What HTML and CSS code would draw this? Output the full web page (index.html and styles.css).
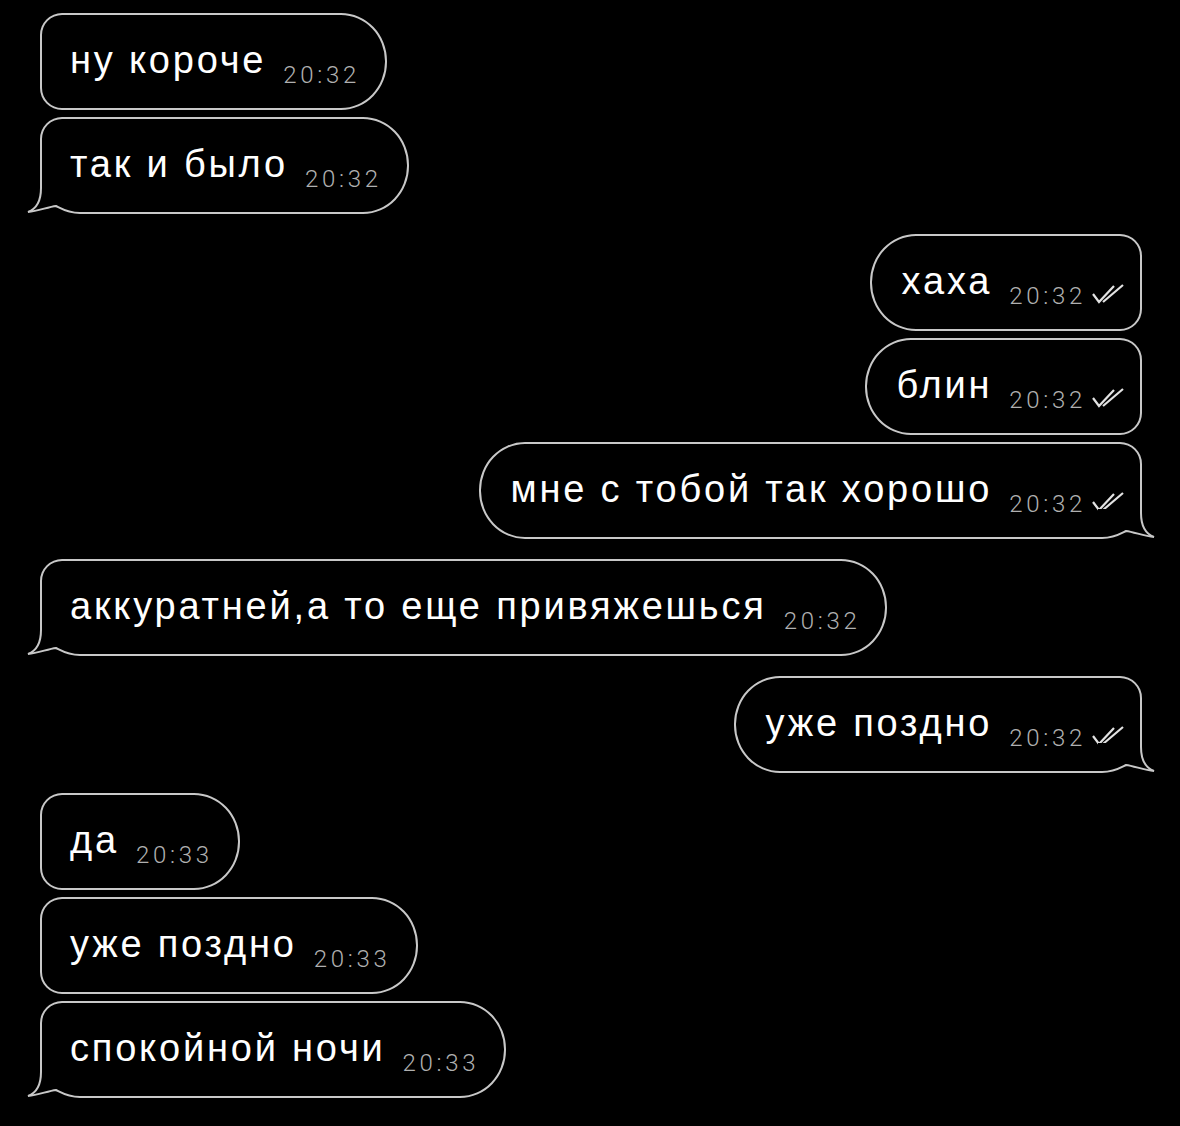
FILE: index.html
```html
<!DOCTYPE html>
<html lang="ru">
<head>
    <meta charset="UTF-8">
    <meta name="viewport" content="width=device-width, initial-scale=1.0">
    <title>Чат</title>
    <link rel="stylesheet" href="styles.css">
</head>
<body>
    <div class="chat">
        <div class="group in">
            <div class="bubble"><span class="text">ну короче</span><span class="time">20:32</span></div>
            <div class="bubble has-tail"><span class="text">так и было</span><span class="time">20:32</span>
                <svg class="tail" viewBox="0 0 60 40"><rect x="0" y="10" width="60" height="30" fill="#000"/><path d="M17 10 L17 14 C17 28 12 35 4 38 C14 37 24 33 32 32 C38 35 44 39 56 39 L60 39" fill="none" stroke="#c8c8c8" stroke-width="2"/></svg>
            </div>
        </div>

        <div class="group out">
            <div class="bubble"><span class="text">хаха</span><span class="time">20:32</span><svg class="check" viewBox="0 0 34 22"><path d="M2 11 L8 19 L23 3 M12 19 L32 2" fill="none" stroke="#e2e2e2" stroke-width="2.2"/></svg></div>
            <div class="bubble"><span class="text">блин</span><span class="time">20:32</span><svg class="check" viewBox="0 0 34 22"><path d="M2 11 L8 19 L23 3 M12 19 L32 2" fill="none" stroke="#e2e2e2" stroke-width="2.2"/></svg></div>
            <div class="bubble has-tail"><span class="text">мне с тобой так хорошо</span><span class="time">20:32</span><svg class="check" viewBox="0 0 34 22"><path d="M2 11 L8 19 L23 3 M12 19 L32 2" fill="none" stroke="#e2e2e2" stroke-width="2.2"/></svg>
                <svg class="tail" viewBox="0 0 60 40"><rect x="0" y="10" width="60" height="30" fill="#000"/><path d="M17 10 L17 14 C17 28 12 35 4 38 C14 37 24 33 32 32 C38 35 44 39 56 39 L60 39" fill="none" stroke="#c8c8c8" stroke-width="2"/></svg>
            </div>
        </div>

        <div class="group in">
            <div class="bubble has-tail"><span class="text">аккуратней,а то еще привяжешься</span><span class="time">20:32</span>
                <svg class="tail" viewBox="0 0 60 40"><rect x="0" y="10" width="60" height="30" fill="#000"/><path d="M17 10 L17 14 C17 28 12 35 4 38 C14 37 24 33 32 32 C38 35 44 39 56 39 L60 39" fill="none" stroke="#c8c8c8" stroke-width="2"/></svg>
            </div>
        </div>

        <div class="group out">
            <div class="bubble has-tail"><span class="text">уже поздно</span><span class="time">20:32</span><svg class="check" viewBox="0 0 34 22"><path d="M2 11 L8 19 L23 3 M12 19 L32 2" fill="none" stroke="#e2e2e2" stroke-width="2.2"/></svg>
                <svg class="tail" viewBox="0 0 60 40"><rect x="0" y="10" width="60" height="30" fill="#000"/><path d="M17 10 L17 14 C17 28 12 35 4 38 C14 37 24 33 32 32 C38 35 44 39 56 39 L60 39" fill="none" stroke="#c8c8c8" stroke-width="2"/></svg>
            </div>
        </div>

        <div class="group in">
            <div class="bubble"><span class="text">да</span><span class="time">20:33</span></div>
            <div class="bubble"><span class="text">уже поздно</span><span class="time">20:33</span></div>
            <div class="bubble has-tail"><span class="text">спокойной ночи</span><span class="time">20:33</span>
                <svg class="tail" viewBox="0 0 60 40"><rect x="0" y="10" width="60" height="30" fill="#000"/><path d="M17 10 L17 14 C17 28 12 35 4 38 C14 37 24 33 32 32 C38 35 44 39 56 39 L60 39" fill="none" stroke="#c8c8c8" stroke-width="2"/></svg>
            </div>
        </div>
    </div>
</body>
</html>
```

FILE: styles.css
```css
body {
    margin: 0;
    background: #000;
    font-family: 'Liberation Sans', Arial, sans-serif;
    color: #fff;
}
.chat {
    display: flex;
    flex-direction: column;
    gap: 20px;
    padding: 13px 38px 0 40px;
}
.group {
    display: flex;
    flex-direction: column;
    gap: 7px;
}
.group.in {
    align-items: flex-start;
}
.group.out {
    align-items: flex-end;
}
.bubble {
    position: relative;
    box-sizing: border-box;
    height: 97px;
    padding: 27px 25px 0 28px;
    border: 2px solid #c8c8c8;
    background: #000;
    font-size: 38px;
    line-height: 36px;
    letter-spacing: 2.8px;
    white-space: nowrap;
}
.in .bubble {
    border-radius: 22px 46px 46px 22px / 22px 48px 48px 22px;
}
.out .bubble {
    padding-left: 30px;
    padding-right: 15px;
    border-radius: 46px 22px 22px 46px / 48px 22px 22px 48px;
}
.time {
    margin-left: 17px;
    font-family: Roboto, 'Liberation Sans', sans-serif;
    font-size: 24px;
    font-weight: 300;
    letter-spacing: 3.7px;
    color: #b0b0b0;
    vertical-align: -10px;
}
.check {
    width: 34px;
    height: 22px;
    margin-left: 5px;
    vertical-align: -11px;
}
.tail {
    position: absolute;
    left: -18px;
    bottom: -2px;
    width: 60px;
    height: 40px;
}
.out .tail {
    left: auto;
    right: -18px;
    transform: scaleX(-1);
}
```
